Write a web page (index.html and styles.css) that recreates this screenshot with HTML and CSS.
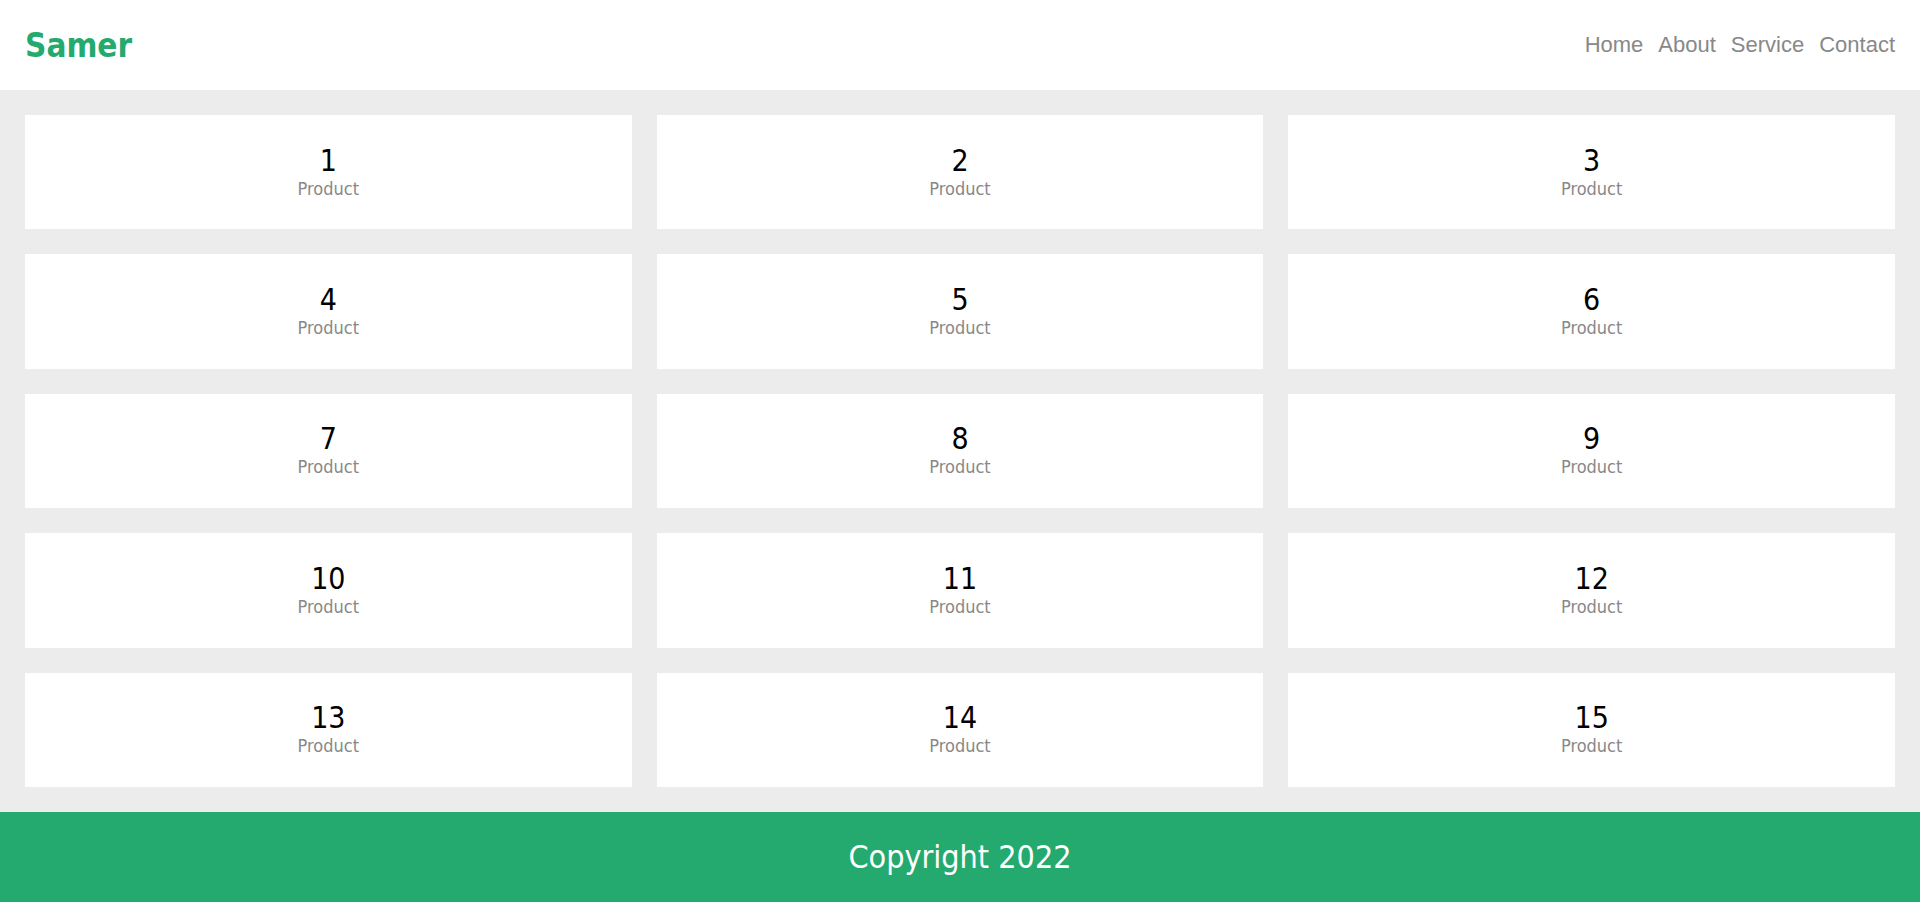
FILE: index.html
```html
<!DOCTYPE html>
<html lang="en">
<head>
<meta charset="utf-8">
<title>Samer</title>
<link rel="stylesheet" href="styles.css">
</head>
<body>
<div class="page">
  <header class="header">
    <div class="logo">Samer</div>
    <nav class="nav">
      <a href="#">Home</a>
      <a href="#">About</a>
      <a href="#">Service</a>
      <a href="#">Contact</a>
    </nav>
  </header>
  <main class="grid">
    <div class="card"><div class="num">1</div><div class="label">Product</div></div>
    <div class="card"><div class="num">2</div><div class="label">Product</div></div>
    <div class="card"><div class="num">3</div><div class="label">Product</div></div>
    <div class="card"><div class="num">4</div><div class="label">Product</div></div>
    <div class="card"><div class="num">5</div><div class="label">Product</div></div>
    <div class="card"><div class="num">6</div><div class="label">Product</div></div>
    <div class="card"><div class="num">7</div><div class="label">Product</div></div>
    <div class="card"><div class="num">8</div><div class="label">Product</div></div>
    <div class="card"><div class="num">9</div><div class="label">Product</div></div>
    <div class="card"><div class="num">10</div><div class="label">Product</div></div>
    <div class="card"><div class="num">11</div><div class="label">Product</div></div>
    <div class="card"><div class="num">12</div><div class="label">Product</div></div>
    <div class="card"><div class="num">13</div><div class="label">Product</div></div>
    <div class="card"><div class="num">14</div><div class="label">Product</div></div>
    <div class="card"><div class="num">15</div><div class="label">Product</div></div>
  </main>
  <footer class="footer">Copyright 2022</footer>
</div>
</body>
</html>
```
FILE: styles.css
```css
* { box-sizing: border-box; }
html, body { margin: 0; padding: 0; }
body {
  font-family: "DejaVu Sans Condensed", "DejaVu Sans", sans-serif;
  background: #ececec;
}
.page {
  min-height: 100vh;
  display: flex;
  flex-direction: column;
}
.header {
  height: 90px;
  background: #fff;
  display: flex;
  align-items: center;
  justify-content: space-between;
  padding: 0 25px;
}
.logo {
  font-family: "DejaVu Sans Condensed", "DejaVu Sans", sans-serif;
  font-weight: bold;
  font-size: 33px;
  color: #24aa6e;
}
.nav {
  display: flex;
  gap: 15px;
}
.nav a {
  font-family: "Liberation Sans", Arial, sans-serif;
  font-size: 22px;
  color: #888;
  text-decoration: none;
}
.grid {
  flex: 1;
  display: grid;
  grid-template-columns: repeat(3, 1fr);
  grid-template-rows: repeat(5, 1fr);
  gap: 25px;
  padding: 25px;
}
.card {
  background: #fff;
  display: flex;
  flex-direction: column;
  align-items: center;
  justify-content: center;
  padding-bottom: 3px;
}
.num {
  font-size: 30px;
  color: #000;
}
.label {
  font-size: 18px;
  color: #888;
}
.footer {
  height: 90px;
  background: #24aa6e;
  color: #fff;
  font-size: 32px;
  display: flex;
  align-items: center;
  justify-content: center;
}
```
